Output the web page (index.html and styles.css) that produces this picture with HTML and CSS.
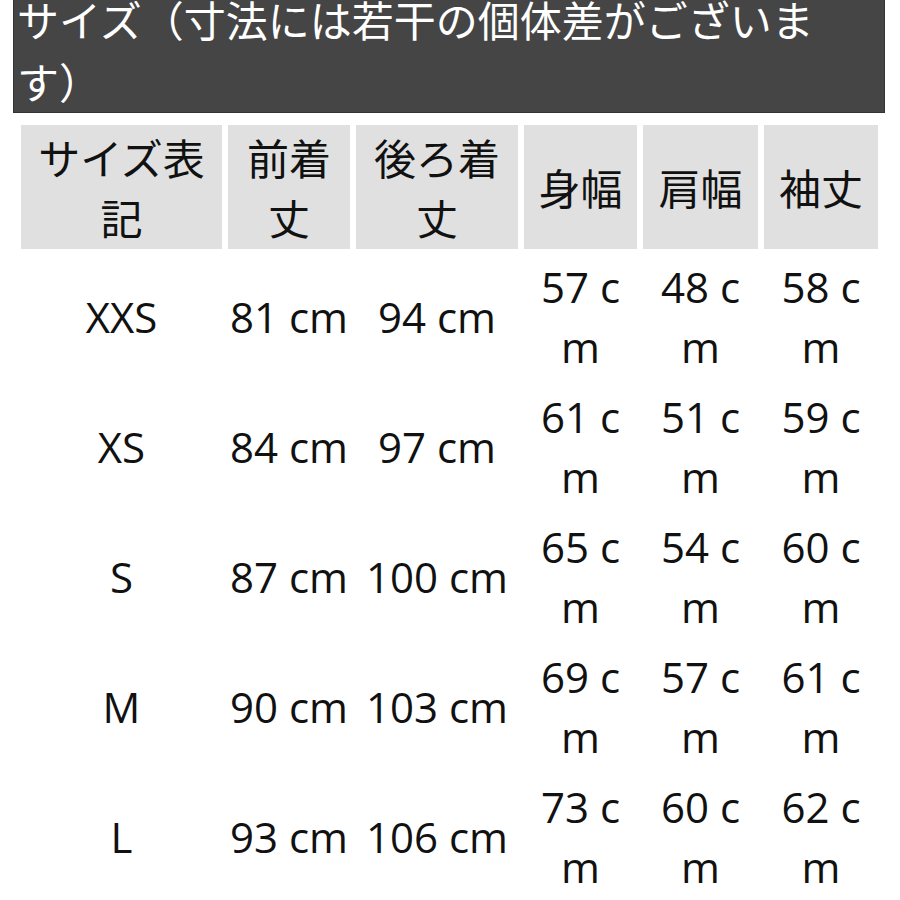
FILE: index.html
```html
<!DOCTYPE html>
<html lang="ja">
<head>
<meta charset="utf-8">
<link rel="stylesheet" href="styles.css">
</head>
<body>
<div class="page">
  <h2 class="heading">サイズ（寸法には若干の個体差がございます）</h2>
  <table class="size-table">
    <colgroup>
      <col class="c1"><col class="c2"><col class="c3"><col class="c4"><col class="c5"><col class="c6">
    </colgroup>
    <thead>
      <tr><th>サイズ表記</th><th>前着丈</th><th>後ろ着丈</th><th>身幅</th><th>肩幅</th><th>袖丈</th></tr>
    </thead>
    <tbody>
      <tr><td>XXS</td><td>81 cm</td><td>94 cm</td><td>57 cm</td><td>48 cm</td><td>58 cm</td></tr>
      <tr><td>XS</td><td>84 cm</td><td>97 cm</td><td>61 cm</td><td>51 cm</td><td>59 cm</td></tr>
      <tr><td>S</td><td>87 cm</td><td>100 cm</td><td>65 cm</td><td>54 cm</td><td>60 cm</td></tr>
      <tr><td>M</td><td>90 cm</td><td>103 cm</td><td>69 cm</td><td>57 cm</td><td>61 cm</td></tr>
      <tr><td>L</td><td>93 cm</td><td>106 cm</td><td>73 cm</td><td>60 cm</td><td>62 cm</td></tr>
    </tbody>
  </table>
</div>
</body>
</html>
```
FILE: styles.css
```css
html, body {
  margin: 0;
  padding: 0;
  background: #ffffff;
}
body {
  font-family: "Open Sans", "Noto Sans CJK JP", sans-serif;
  color: #111;
  overflow: hidden;
}
.page {
  margin: -13px 0 0 13px;
  width: 872px;
}
.heading {
  margin: 0;
  padding: 0 3px;
  background: #454545;
  border: 1px solid #333;
  color: #fff;
  font-family: "Noto Sans CJK JP", sans-serif;
  font-weight: 400;
  font-size: 42px;
  line-height: 62px;
  text-spacing-trim: space-all;
}
.size-table {
  margin: 6px 0 0 2px;
  width: 869px;
  table-layout: fixed;
  border-collapse: separate;
  border-spacing: 6px;
  font-size: 42px;
  line-height: 60px;
}
.c1 { width: 201px; }
.c2 { width: 122px; }
.c3 { width: 162px; }
.c4 { width: 113px; }
.c5 { width: 115px; }
.c6 { width: 114px; }
.size-table th,
.size-table td {
  padding: 2px 0;
  text-align: center;
  vertical-align: middle;
  font-weight: 400;
  word-break: break-all;
}
.size-table th {
  background: #e0e0e0;
  font-family: "Noto Sans CJK JP", sans-serif;
  color: #111;
}
.size-table td {
  height: 120px;
}
```
